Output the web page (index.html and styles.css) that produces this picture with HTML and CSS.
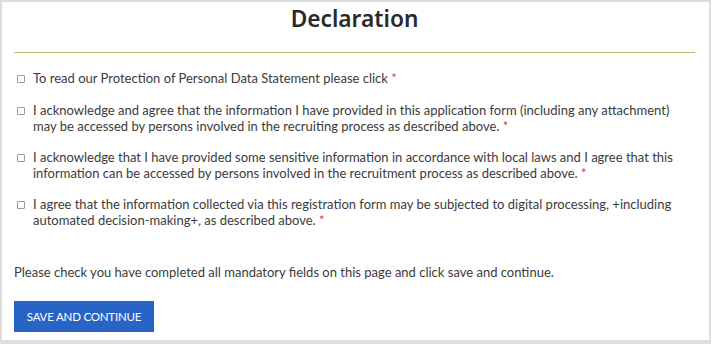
FILE: index.html
```html
<!DOCTYPE html>
<html lang="en">
<head>
<meta charset="utf-8">
<title>Declaration</title>
<link rel="stylesheet" href="styles.css">
</head>
<body>
<main class="page">
  <header class="header">
    <h1 class="title">Declaration</h1>
  </header>
  <form class="form">
    <ul class="items">
      <li class="item">
        <input type="checkbox" class="check" id="c1">
        <label for="c1" class="label">To read our Protection of Personal Data Statement please click <span class="req">*</span></label>
      </li>
      <li class="item">
        <input type="checkbox" class="check" id="c2">
        <label for="c2" class="label">I acknowledge and agree that the information I have provided in this application form (including any attachment) may be accessed by persons involved in the recruiting process as described above. <span class="req">*</span></label>
      </li>
      <li class="item">
        <input type="checkbox" class="check" id="c3">
        <label for="c3" class="label">I acknowledge that I have provided some sensitive information in accordance with local laws and I agree that this information can be accessed by persons involved in the recruitment process as described above. <span class="req">*</span></label>
      </li>
      <li class="item">
        <input type="checkbox" class="check" id="c4">
        <label for="c4" class="label">I agree that the information collected via this registration form may be subjected to digital processing, +including automated decision-making+, as described above. <span class="req">*</span></label>
      </li>
    </ul>
    <p class="note">Please check you have completed all mandatory fields on this page and click save and continue.</p>
    <button type="button" class="btn">SAVE AND CONTINUE</button>
  </form>
</main>
</body>
</html>
```
FILE: styles.css
```css
html {
  background: #dedede;
}
body {
  margin: 2px 2px 0 2px;
  font-family: "Lato", "Liberation Sans", sans-serif;
  color: #3b3b3b;
}
.page {
  background: #ffffff;
  height: 338px;
  padding: 0 14px 0 12px;
  box-sizing: border-box;
}
.header {
  padding-top: 2px;
  padding-bottom: 18px;
  border-bottom: 1px solid #bcb875;
}
.title {
  margin: 0;
  text-align: center;
  font-family: "Noto Sans", sans-serif;
  font-weight: 600;
  font-size: 22.7px;
  line-height: 30px;
  color: #2a2a2a;
}
.form {
  padding-top: 17px;
}
.items {
  list-style: none;
  margin: 0;
  padding: 0;
}
.item {
  display: flex;
  align-items: flex-start;
  gap: 8px;
  margin-bottom: 15px;
  font-size: 13px;
  line-height: 16px;
}
.item:first-child {
  margin-bottom: 16px;
}
.check {
  appearance: none;
  -webkit-appearance: none;
  flex: none;
  width: 8px;
  height: 8px;
  margin: 5px 0 0 3px;
  border: 1px solid #9a9a9a;
  border-radius: 1px;
  background: #fff;
  box-sizing: border-box;
}
.label {
  flex: 1;
}
.req {
  color: #e23b3b;
}
.note {
  margin: 36px 0 0 0;
  font-size: 13px;
  line-height: 16px;
}
.btn {
  display: block;
  margin-top: 21px;
  width: 140px;
  height: 31px;
  padding: 0;
  border: none;
  border-radius: 0;
  background: #2764c6;
  color: #ffffff;
  font-family: "Lato", "Liberation Sans", sans-serif;
  font-size: 11.5px;
  letter-spacing: -0.2px;
  line-height: 31px;
  text-align: center;
}
```
